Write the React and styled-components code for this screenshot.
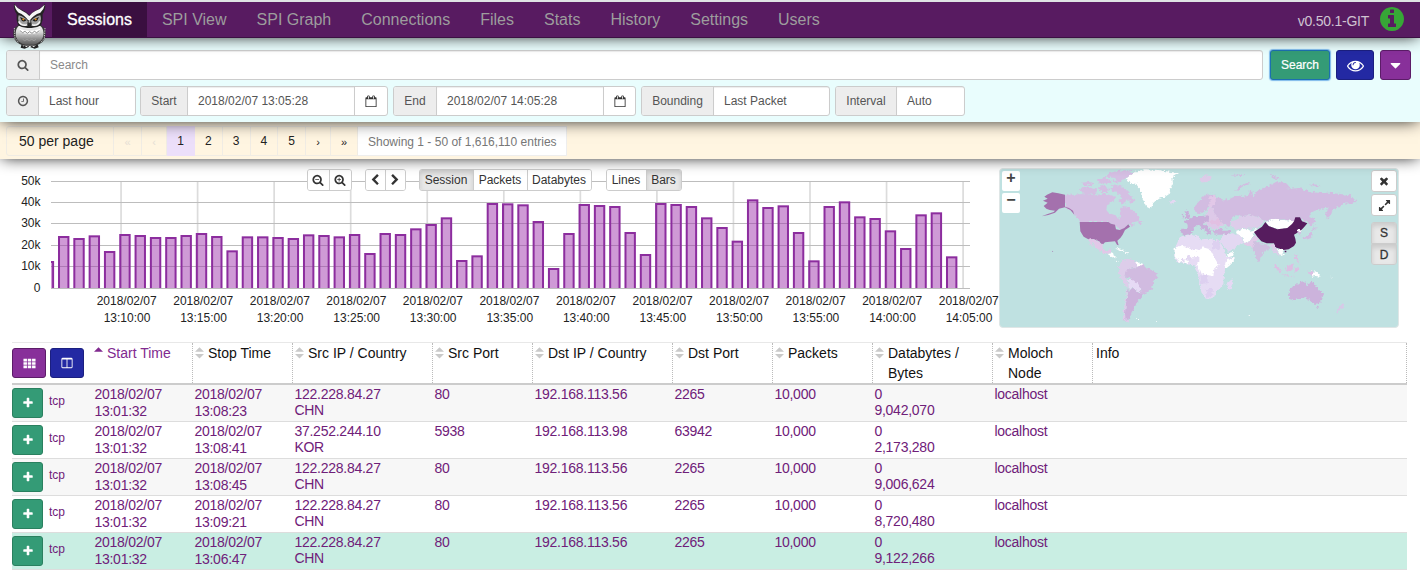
import React from "react";
import styled, { createGlobalStyle } from "styled-components";

const GlobalStyle = createGlobalStyle`
  * { box-sizing: border-box; }
  body {
    margin: 0;
    background: #fff;
    color: #333;
    font-family: "Liberation Sans", Arial, sans-serif;
    font-size: 12px;
    overflow: hidden;
  }
`;

const GLYPHS = {
  search:
    "M1216 832q0-185-131.5-316.5t-316.5-131.5-316.5 131.5-131.5 316.5 131.5 316.5 316.5 131.5 316.5-131.5 131.5-316.5zm512 832q0 52-38 90t-90 38q-54 0-90-38l-343-342q-179 124-399 124-143 0-273.5-55.5t-225-150-150-225-55.5-273.5 55.5-273.5 150-225 225-150 273.5-55.5 273.5 55.5 225 150 150 225 55.5 273.5q0 220-124 399l343 343q37 37 37 90z",
  plus:
    "M1600 736v192q0 40-28 68t-68 28h-416v416q0 40-28 68t-68 28h-192q-40 0-68-28t-28-68v-416h-416q-40 0-68-28t-28-68v-192q0-40 28-68t68-28h416v-416q0-40 28-68t68-28h192q40 0 68 28t28 68v416h416q40 0 68 28t28 68z",
  clock:
    "M1024 544v448q0 14-9 23t-23 9h-320q-14 0-23-9t-9-23v-64q0-14 9-23t23-9h224v-352q0-14 9-23t23-9h64q14 0 23 9t9 23zm416 352q0-148-73-273t-198-198-273-73-273 73-198 198-73 273 73 273 198 198 273 73 273-73 198-198 73-273zm224 0q0 209-103 385.5t-279.5 279.5-385.5 103-385.5-103-279.5-279.5-103-385.5 103-385.5 279.5-279.5 385.5-103 385.5 103 279.5 279.5 103 385.5z",
  info:
    "M1152 1376v-160q0-14-9-23t-23-9h-96v-512q0-14-9-23t-23-9h-320q-14 0-23 9t-9 23v160q0 14 9 23t23 9h96v320h-96q-14 0-23 9t-9 23v160q0 14 9 23t23 9h448q14 0 23-9t9-23zm-128-896v-160q0-14-9-23t-23-9h-192q-14 0-23 9t-9 23v160q0 14 9 23t23 9h192q14 0 23-9t9-23zm640 416q0 209-103 385.5t-279.5 279.5-385.5 103-385.5-103-279.5-279.5-103-385.5 103-385.5 279.5-279.5 385.5-103 385.5 103 279.5 279.5 103 385.5z",
  eye:
    "M1664 960q-152-236-381-353 61 104 61 225 0 185-131.5 316.5t-316.5 131.5-316.5-131.5-131.5-316.5q0-121 61-225-229 117-381 353 133 205 333.5 326.5t434.5 121.5 434.5-121.5 333.5-326.5zm-720-384q0-20-14-34t-34-14q-125 0-214.5 89.5t-89.5 214.5q0 20 14 34t34 14 34-14 14-34q0-86 61-147t147-61q20 0 34-14t14-34zm848 384q0 34-20 69-140 230-376.5 368.5t-499.5 138.5-499.5-139-376.5-368q-20-35-20-69t20-69q140-229 376.5-368t499.5-139 499.5 139 376.5 368q20 35 20 69z",
  caret:
    "M1408 704q0 26-19 45l-448 448q-19 19-45 19t-45-19l-448-448q-19-19-19-45t19-45 45-19h896q26 0 45 19t19 45z",
  times:
    "M1490 1322q0 40-28 68l-136 136q-28 28-68 28t-68-28l-294-294-294 294q-28 28-68 28t-68-28l-136-136q-28-28-28-68t28-68l294-294-294-294q-28-28-28-68t28-68l136-136q28-28 68-28t68 28l294 294 294-294q28-28 68-28t68 28l136 136q28 28 28 68t-28 68l-294 294 294 294q28 28 28 68z",
  expand:
    "M883 1056q0 13-10 23l-332 332 144 144q19 19 19 45t-19 45-45 19h-448q-26 0-45-19t-19-45v-448q0-26 19-45t45-19 45 19l144 144 332-332q10-10 23-10t23 10l114 114q10 10 10 23zm781-864v448q0 26-19 45t-45 19-45-19l-144-144-332 332q-10 10-23 10t-23-10l-114-114q-10-10-10-23t10-23l332-332-144-144q-19-19-19-45t19-45 45-19h448q26 0 45 19t19 45z",
  left:
    "M1427 301l-531 531 531 531q19 19 19 45t-19 45l-166 166q-19 19-45 19t-45-19l-742-742q-19-19-19-45t19-45l742-742q19-19 45-19t45 19l166 166q19 19 19 45t-19 45z",
  right:
    "M365 301l531 531-531 531q-19 19-19 45t19 45l166 166q19 19 45 19t45-19l742-742q19-19 19-45t-19-45l-742-742q-19-19-45-19t-45 19l-166 166q-19 19-19 45t19 45z",
  calendar:
    "M192 1664h1408v-1024h-1408v1024zm384-1152v-288q0-14-9-23t-23-9h-64q-14 0-23 9t-9 23v288q0 14 9 23t23 9h64q14 0 23-9t9-23zm768 0v-288q0-14-9-23t-23-9h-64q-14 0-23 9t-9 23v288q0 14 9 23t23 9h64q14 0 23-9t9-23zm384-64v1280q0 52-38 90t-90 38h-1408q-52 0-90-38t-38-90v-1280q0-52 38-90t90-38h128v-96q0-66 47-113t113-47h64q66 0 113 47t47 113v96h384v-96q0-66 47-113t113-47h64q66 0 113 47t47 113v96h128q52 0 90 38t38 90z",
  columns:
    "M224 1536h608v-1152h-640v1120q0 13 9.5 22.5t22.5 9.5zm1376-32v-1120h-640v1152h608q13 0 22.5-9.5t9.5-22.5zm128-1216v1216q0 66-47 113t-113 47h-1344q-66 0-113-47t-47-113v-1216q0-66 47-113t113-47h1344q66 0 113 47t47 113z",
  grid:
    "M64 256h480v352H64zM656 256h480v352H656zM1248 256h480v352h-480zM64 720h480v352H64zM656 720h480v352H656zM1248 720h480v352h-480zM64 1184h480v352H64zM656 1184h480v352H656zM1248 1184h480v352h-480z",
};
GLYPHS.zoomOut = GLYPHS.search + "M480 768h576v128h-576z";
GLYPHS.zoomIn = GLYPHS.zoomOut + "M704 544h128v224h-128zM704 896h128v224h-128z";

const Svg = styled.svg`
  display: block;
  flex: none;
  fill: currentColor;
`;
const Icon = ({ name, size = 12 }) => (
  <Svg width={size} height={size} viewBox="0 0 1792 1792">
    <path d={GLYPHS[name]} />
  </Svg>
);

const Page = styled.div`
  width: 1420px;
  height: 573px;
  overflow: hidden;
  display: flex;
  flex-direction: column;
`;

/* ---------- navigation ---------- */
const Nav = styled.nav`
  position: relative;
  z-index: 4;
  flex: none;
  display: flex;
  height: 38px;
  padding-left: 52px;
  background: #581b61;
  border-top: 2px solid #dfe3e4;
  border-bottom: 1px solid #3c1043;
  box-shadow: 0 0 16px -2px #000;
`;
const NavItem = styled.a`
  padding: 0 15px;
  line-height: 35px;
  font-size: 16px;
  color: ${(p) => (p.$active ? "#fff" : "#9d9d9d")};
  background: ${(p) => (p.$active ? "#3a0f40" : "transparent")};
  -webkit-text-stroke: ${(p) => (p.$active ? "0.3px #fff" : "0")};
`;
const Version = styled.div`
  margin-left: auto;
  padding: 3px 14px 0 0;
  display: flex;
  align-items: center;
  gap: 9px;
  font-size: 14px;
  letter-spacing: -0.25px;
  color: #cfc3d1;
`;
const InfoBadge = styled.span`
  color: #37a637;
  margin-top: -4px;
`;
const OwlBox = styled.svg`
  position: absolute;
  left: 12px;
  top: 1px;
`;

const Owl = () => (
  <OwlBox width="36" height="46" viewBox="36 9 108 138">
    <defs>
      <linearGradient id="owlBody" x1="0" y1="0" x2="0" y2="1">
        <stop offset="0" stopColor="#f4f4f4" />
        <stop offset="0.35" stopColor="#d5d5d5" />
        <stop offset="0.7" stopColor="#8d8d8d" />
        <stop offset="1" stopColor="#5a5a5a" />
      </linearGradient>
    </defs>
    <path d="M66 128L62 143L74 146L88 140L104 146L116 142L110 126z" fill="#222" />
    <path d="M69 138l5-4 5 5 6-5 4 6 6-6 6 5 6-5" stroke="#e8e8e8" strokeWidth="4" fill="none" />
    <path d="M54 76Q37 84 40 106Q44 132 72 137H106Q134 130 137 106Q139 84 124 76z" fill="#3a3a3a" />
    <path d="M56 78Q44 88 48 110Q55 130 76 134H102Q125 128 130 108Q133 88 121 78z" fill="url(#owlBody)" />
    <path d="M43 84l2 32M135 84l-2 32M48 118l8 10M130 118l-8 10" stroke="#c4c4c4" strokeWidth="3" strokeDasharray="4 3" />
    <path d="M42 11Q40 28 50 42Q48 62 54 76Q70 86 88 84Q108 86 123 76Q130 60 128 42Q138 28 135 11Q124 24 106 32Q96 37 88 46Q80 36 68 31Q52 24 42 11z" fill="#242424" />
    <path d="M44 14Q45 28 56 38Q74 44 87 64Q100 44 121 38Q132 28 134 14Q122 27 106 33Q95 38 88 48Q80 38 66 32Q52 25 44 14z" fill="#f7f7f7" />
    <path d="M56 46Q52 60 60 72Q72 78 82 72L84 64Q74 50 56 46zM121 46Q126 60 117 72Q106 78 95 72L92 64Q102 50 121 46z" fill="#a2a2a2" />
    <path d="M56 64Q64 80 82 74M120 64Q112 80 95 74" stroke="#f2f2f2" strokeWidth="5" fill="none" />
    <path d="M60 51L80 60Q74 67 66 63zM117 51L97 60Q102 67 111 63z" fill="#1a1a1a" />
    <circle cx="70" cy="58" r="3.4" fill="#d98a1f" />
    <circle cx="107" cy="58" r="3.4" fill="#d98a1f" />
    <path d="M84 60h9l1 8-5 12-6-12z" fill="#2c2c2c" />
    <path d="M86 60h5v8h-5z" fill="#bbb" />
    <path d="M58 86Q88 98 121 86L117 97Q88 106 62 97z" fill="#fff" />
    <path d="M60 92l8 6 7-4 7 6 7-5 7 5 7-6 7 4 8-6" stroke="#777" strokeWidth="2.5" fill="none" />
    <path d="M62 106l6 5 6-5 7 6 7-6 7 6 7-6 6 5 7-5M68 118l6 4 7-4 7 4 7-4 7 4 6-4" stroke="#a9a9a9" strokeWidth="2" fill="none" />
  </OwlBox>
);

/* ---------- search form ---------- */
const SearchPanel = styled.section`
  position: relative;
  z-index: 3;
  flex: none;
  height: 84px;
  padding: 12px 9px 6px 6px;
  display: flex;
  flex-direction: column;
  gap: 6px;
  background: #e9fdfd;
  box-shadow: 0 0 16px -2px #000;
`;
const FormRow = styled.div`
  display: flex;
`;
const Group = styled.div`
  display: flex;
  height: 30px;
  width: ${(p) => p.$w}px;
  margin-right: ${(p) => p.$mr || 5}px;
  border: 1px solid #ccc;
  border-radius: 3px;
  overflow: hidden;
  background: #fff;
  color: #555;
`;
const Addon = styled.span`
  width: ${(p) => p.$w}px;
  flex: none;
  display: flex;
  align-items: center;
  justify-content: center;
  background: #ededed;
  border-right: 1px solid #ccc;
`;
const Value = styled.span`
  flex: 1;
  padding-left: 10px;
  line-height: 28px;
  color: ${(p) => (p.$hint ? "#8a8a8a" : "#555")};
  box-shadow: inset 0 1px 1px rgba(0, 0, 0, 0.075);
`;
const PickerButton = styled.span`
  width: ${(p) => p.$w}px;
  display: flex;
  align-items: center;
  justify-content: center;
  border-left: 1px solid #ccc;
  color: #333;
`;
const tones = {
  green: ["#349b76", "#2a805f"],
  blue: ["#2329a3", "#1b1f80"],
  purple: ["#88309a", "#5c1c68"],
};
const Button = styled.button`
  width: ${(p) => p.$w}px;
  height: 30px;
  flex: none;
  padding: 0;
  display: flex;
  align-items: center;
  justify-content: center;
  font: 12px "Liberation Sans", Arial, sans-serif;
  color: #fff;
  background: ${(p) => tones[p.$tone][0]};
  border: 1px solid ${(p) => (p.$focus ? "#1c6fb0" : tones[p.$tone][1])};
  border-radius: 3px;
  box-shadow: ${(p) => (p.$focus ? "0 0 1px 1px #7db8ea" : "none")};
  -webkit-text-stroke: 0.2px #fff;
`;
const SearchActions = styled.div`
  display: flex;
  gap: 6px;
`;

/* ---------- paging ---------- */
const PagerPanel = styled.section`
  position: relative;
  z-index: 2;
  flex: none;
  height: 37px;
  padding: 4px 6px;
  display: flex;
  background: #fff5e1;
  box-shadow: 0 0 16px -2px #000;
`;
const PageSize = styled.span`
  width: 108px;
  height: 30px;
  padding-left: 12px;
  line-height: 29px;
  font-size: 14px;
  color: #222;
  border: 1px solid #f0ece4;
  border-radius: 3px 0 0 3px;
`;
const PageLink = styled.span`
  width: ${(p) => p.$w}px;
  height: 30px;
  line-height: ${(p) => (p.$arrow ? 30 : 28)}px;
  font-size: ${(p) => (p.$arrow ? 11 : 12)}px;
  text-align: center;
  color: ${(p) => (p.$off ? "#e6e0d6" : "#222")};
  background: ${(p) => (p.$active ? "#ecdffa" : "transparent")};
  border: 1px solid ${(p) => (p.$active ? "#ecdffa" : "#f0ece4")};
  border-left: 0;
`;
const Showing = styled.span`
  width: 209px;
  height: 30px;
  padding-left: 10px;
  line-height: 30px;
  color: #777;
  background: #fff;
  border: 1px solid #eee;
  border-left: 0;
`;

/* ---------- chart ---------- */
const Visuals = styled.section`
  flex: none;
  height: 183px;
  display: flex;
`;
const ChartArea = styled.div`
  position: relative;
  width: 999px;
  height: 183px;
`;
const ChartSvg = styled.svg`
  display: block;
  font-family: "Liberation Sans", Arial, sans-serif;
  font-size: 12px;
  fill: #222;
`;
const ChartTools = styled.div`
  position: absolute;
  left: 307px;
  top: 10px;
  display: flex;
`;
const ToolGroup = styled.div`
  display: flex;
  height: 22px;
  margin-right: ${(p) => p.$mr}px;
  border: 1px solid #ccc;
  border-radius: 3px;
  background: #fff;
  overflow: hidden;
`;
const Tool = styled.span`
  width: ${(p) => p.$w}px;
  display: flex;
  align-items: center;
  justify-content: center;
  padding-right: 1px;
  color: #333;
  background: ${(p) => (p.$on ? "#e8e8e8" : "#fff")};
  box-shadow: ${(p) => (p.$on ? "inset 0 3px 5px rgba(0,0,0,.125)" : "none")};
  & + & { border-left: 1px solid #ccc; }
`;

const barTops = [
  303, 228, 234, 226, 273, 222, 225, 231, 231, 225, 219, 228, 271, 229, 229, 231, 234, 223, 225, 229,
  222, 279, 219, 222, 205, 192, 172, 300, 286, 129, 130, 133, 183, 324, 219, 132, 135, 138, 216, 282,
  129, 132, 138, 172, 201, 242, 118, 141, 136, 216, 301, 138, 124, 169, 174, 211, 264, 163, 157, 289,
].map((t) => t / 3 + 1);
const ticks = ["13:10", "13:15", "13:20", "13:25", "13:30", "13:35", "13:40", "13:45", "13:50", "13:55", "14:00", "14:05"];
const levels = [
  ["50k", 22.5], ["40k", 43.5], ["30k", 64.5], ["20k", 86.5], ["10k", 107.5], ["0", 129.5],
];

const Chart = () => (
  <ChartSvg width="999" height="183">
    <clipPath id="plot"><rect x="51" y="0" width="920" height="129" /></clipPath>
    {ticks.map((t, i) => (
      <rect key={t} x={120.2 + i * 76.55} y="22" width="1.7" height="108" fill="#dcdcdc" />
    ))}
    {levels.map(([label, y]) => (
      <React.Fragment key={label}>
        <path d={`M51 ${y}H970`} stroke="#bdbdbd" />
        <text x="40.5" y={y + 3.5} textAnchor="end">{label}</text>
      </React.Fragment>
    ))}
    <g clipPath="url(#plot)">
      {barTops.map((top, i) => (
        <rect
          key={i}
          x={43.7 + i * 15.31}
          y={top + 1}
          width="9.4"
          height={140 - top}
          fill="#a036ad"
          fillOpacity="0.5"
          stroke="#8c2d9e"
          strokeWidth="2"
        />
      ))}
    </g>
    {ticks.map((t, i) => (
      <g key={t} textAnchor="middle">
        <text x={126.7 + i * 76.55} y="146">2018/02/07</text>
        <text x={127 + i * 76.55} y="163">{t}:00</text>
      </g>
    ))}
  </ChartSvg>
);

/* ---------- map ---------- */
const MapBox = styled.div`
  position: relative;
  width: 400px;
  height: 160px;
  margin-top: 9px;
  border: 1px solid #dfe6e6;
  border-radius: 4px;
  background: #bfe1e1;
  overflow: hidden;
`;
const MapZoom = styled.div`
  position: absolute;
  left: 2px;
  top: 2px;
  display: flex;
  flex-direction: column;
  gap: 2px;
`;
const ZoomKey = styled.span`
  width: 18px;
  height: 20px;
  border-radius: 2px;
  background: #fff;
  color: #444;
  font-size: 16px;
  font-weight: bold;
  line-height: 14px;
  text-align: center;
`;
const MapTools = styled.div`
  position: absolute;
  right: 1px;
  top: 1px;
  display: flex;
  flex-direction: column;
`;
const MapKey = styled.span`
  width: 26px;
  height: ${(p) => p.$h || 22}px;
  margin-bottom: ${(p) => p.$mb || 0}px;
  display: flex;
  align-items: center;
  justify-content: center;
  color: #333;
  font-size: 12px;
  -webkit-text-stroke: 0.3px #333;
  background: ${(p) => (p.$on ? "#e8e8e8" : "#fff")};
  border: 1px solid #ccc;
  border-radius: ${(p) => p.$r || "3px"};
  box-shadow: ${(p) => (p.$on ? "inset 0 3px 5px rgba(0,0,0,.125)" : "none")};
`;

const west = [
  ["#d5bfe3", "M210 103L232 105L262 102L300 106L330 100L352 108L366 112L352 126L336 140L336 152L352 160L368 164L372 178L378 166L376 148L384 138L404 142L412 154L424 160L434 176L428 184L408 188L420 194L410 198L402 192L388 206L372 208L362 196L344 190L338 186H256L246 172L232 156L210 142z"],
  ["#d5bfe3", "M252 88L268 80L288 84L306 88L304 102L282 104L262 100zM258 68L282 66L300 70L288 76L266 76zM312 80L330 76L344 86L338 96L318 96zM352 72L376 78L396 92L412 112L418 124L408 128L396 118L386 134L368 122L380 112L366 96L350 92zM306 58L330 54L352 62L342 70L312 70zM330 50L346 38L372 32L400 30L416 36L402 50L386 56L370 68L356 66L362 54zM430 184L442 186L438 194L428 190z"],
  ["#a471ad", "M254 186H340L348 191L360 194L363 208L374 210L388 204L400 193L405 200L390 210L383 224L376 234L367 242L371 256L366 254L360 244L344 245L330 247L322 255L312 244L296 238L280 238L266 230L256 214z"],
  ["#a471ad", "M210 104L190 100L172 97L156 104L148 110L158 116L144 122L158 128L146 138L154 146L164 150L180 152L176 156L158 162L140 169L160 165L180 158L192 146L210 142L226 150L238 164L234 152L222 144L210 140zM172 272L175 275L171 275z"],
  ["#e2c8e8", "M280 238L296 238L312 244L322 254L324 268L330 274L350 268L346 278L338 282L322 278L308 268L298 256L286 246L296 262L290 258z"],
  ["#fff", "M338 282L350 280L362 288L360 298L352 292zM360 264L378 266L390 274L376 272zM392 276L404 278L394 280zM362 302L372 304L368 306z"],
  ["#fff", "M392 58L410 42L424 34L452 28L490 30L514 34L552 40L532 52L534 72L524 88L526 100L508 112L484 120L472 132L466 146L454 140L446 124L440 106L436 88L424 72L406 68z"],
  ["#e3d8f2", "M524 122L536 119L544 125L534 131L522 129z"],
  ["#ddcdea", "M372 322L380 300L400 296L424 304L442 318L430 322L402 326L404 346L388 346L396 362L402 386L384 366L372 342z"],
  ["#fff", "M420 304L446 312L440 322L426 316z"],
  ["#d1bbe0", "M386 348L392 334L404 326L420 324L436 318L446 312L450 322L470 330L488 340L486 352L476 366L472 384L456 396L444 408L434 400L436 386L422 378L410 358z"],
  ["#e6daf5", "M398 358L410 356L424 368L434 380L436 396L424 392L416 384L402 386z"],
  ["#cdb3dc", "M402 386L416 386L434 400L444 408L436 418L424 430L418 446L410 456L404 476L396 488L388 480L390 450L394 420z"],
  ["#ddcdea", "M396 380L400 388L394 424L390 460L392 480L408 486L396 488L386 478L386 446L394 410z"],
  ["#fff", "M424 474h5v3h-5zM482 484h4v2h-4z"],
];
const east = [
  ["#d2bce1", "M40 116L60 112L64 122L90 116L112 106L130 110L146 108L146 94L156 90L160 112L172 92L184 86L206 78L232 64L256 70L270 86L300 84L322 92L352 98L388 98L420 102L452 106L470 126L454 128L430 132L420 140L398 148L392 164L380 178L378 160L388 142L366 146L336 156L328 168L344 176L338 200L320 186L298 170L280 184L252 178L218 180L196 184L178 172L150 166L128 168L106 166L92 180L90 196L78 200L66 184L46 172L42 154L34 136z"],
  ["#d2bce1", "M106 92L118 78L146 68L150 72L126 80L112 96zM208 44L224 48L242 58L224 56zM86 46L108 44L136 42L122 48zM330 72L352 74L362 80L338 78zM340 168L346 180L344 188z"],
  ["#ddcbe8", "M-2 56L18 46L36 50L26 62L10 70zM8 62L16 60z"],
  ["#d2bce1", "M-18 146L-8 126L12 108L34 100L46 106L44 124L34 134L24 142L18 150L6 160L-10 162z"],
  ["#e2c8e8", "M26 110L44 104L48 130L32 144L24 136L32 124z"],
  ["#ddc9e8", "M24 146L38 142L44 160L62 182L72 196L56 204L36 208L26 196L12 188L16 166z"],
  ["#e2c0e2", "M28 180L58 178L70 188L54 196L32 192z"],
  ["#c9aeda", "M-56 206L-36 206L-38 192L-48 184L-30 178L-16 168L6 168L28 166L26 184L12 190L22 202L34 220L28 224L14 208L2 206L0 196L-12 196L-20 208L-28 222L-48 226L-58 220z"],
  ["#c9aeda", "M-46 176L-40 164L-50 150L-36 152L-30 168L-28 178zM-56 168L-50 162L-50 176z"],
  ["#cdb3dc", "M36 212L58 206L88 208L92 220L66 224L44 224z"],
  ["#ddcdea", "M92 186L112 178L126 168L156 166L182 174L192 184L178 200L152 206L128 204L108 210L98 206z"],
  ["#fff", "M106 212L130 206L150 212L174 206L166 216L156 232L150 244L130 246L128 232L112 222z"],
  ["#e3d8f2", "M66 226L92 220L112 222L126 230L130 250L118 256L100 268L84 276L76 266L62 246z"],
  ["#fff", "M80 280L102 276L98 288L84 292z"],
  ["#e1cbe8", "M132 248L150 244L160 230L168 226L176 236L164 250L158 264L148 258L134 256z"],
  ["#cfc0e0", "M158 266L158 252L168 242L180 250L206 254L210 268L196 270L184 288L178 306L172 304L164 284z"],
  ["#fff", "M196 186L218 180L254 180L282 184L286 194L264 206L236 210L210 202z"],
  ["#561c5e", "M162 216L186 200L196 186L206 198L232 208L262 204L276 192L282 184L286 172L300 172L306 184L322 190L312 202L304 210L292 218L282 224L286 236L288 248L282 258L266 268L250 270L232 264L226 262L222 250L200 250L184 244L172 230z"],
  ["#561c5e", "M254 272h5v5h-5z"],
  ["#d2bce1", "M292 216L304 210L302 222L296 226zM308 232L326 228L336 212L342 198L350 206L338 214L336 232L320 238L310 240z"],
  ["#fff", "M290 210L306 208L296 218z"],
  ["#ddcdea", "M208 254L222 252L228 266L236 278L238 288L228 282L216 264z"],
  ["#fff", "M230 266L246 268L252 284L244 288L236 276z"],
  ["#dcbfe3", "M222 312L236 322L246 340L238 338L226 322zM246 342L272 348L290 352L262 350zM258 322L278 310L278 328L264 336L256 330zM286 322L296 322L290 336L284 334zM282 282L292 288L298 312L286 296zM322 334L340 334L338 350z"],
  ["#fff", "M338 332L352 338L362 350L346 348L336 350z"],
  ["#ccb3dc", "M266 396L270 386L286 376L298 366L314 362L318 372L328 376L334 358L342 370L354 386L370 402L368 414L358 430L340 432L328 420L312 412L292 418L274 422L268 412zM348 440L357 442L352 447z"],
  ["#d9c7e8", "M428 430L434 436L424 446L408 460L416 444z"],
  ["#e6dcf4", "M-60 230L-30 224L-6 228L0 238L30 236L58 242L68 262L80 290L104 294L94 310L76 326L72 346L70 376L50 394L42 412L20 420L6 400L-2 372L-4 344L-16 316L-44 312L-70 304L-78 286L-74 262z"],
  ["#fff", "M-76 266L-56 256L-40 262L-18 270L0 272L8 262L30 268L40 284L46 298L58 318L42 328L40 348L14 344L0 336L-8 318L-20 304L-26 294L-40 312L-62 304L-76 290z"],
  ["#fff", "M80 296L104 294L94 312L78 326L74 316z"],
  ["#e3d8f2", "M-38 286L-26 290L-30 304L-40 300zM-56 300L-46 298L-46 310z"],
  ["#e6dcf4", "M-24 292L-2 290L-2 306L-14 316L-24 308z"],
  ["#ddd0f0", "M36 242L58 242L62 270L36 268zM-2 346L20 348L24 370L0 372zM20 388L40 386L36 408L18 416z"],
  ["#e6d8f4", "M82 366L98 358L98 370L88 394L82 388z"],
  ["#fff", "M146 466h4v2h-4zM392 350h4v2h-4z"],
];
const solid = ["#a471ad", "#561c5e"];
const Region = ({ fill, d }) => (
  <path d={d} fill={fill} filter={solid.includes(fill) ? undefined : "url(#coast)"} />
);
const World = () => (
  <Svg width="398" height="158">
    <filter id="coast" x="-10%" y="-10%" width="120%" height="120%" colorInterpolationFilters="sRGB">
      <feTurbulence type="fractalNoise" baseFrequency="0.12" numOctaves="2" seed="4" />
      <feDisplacementMap in="SourceGraphic" scale="15" xChannelSelector="R" yChannelSelector="G" />
    </filter>
    <g transform="translate(-5 -9) scale(.33333)">
      {west.slice(0, 2).map(([fill, d], i) => <Region key={i} d={d} fill={fill} />)}
      <path d="M336 136L352 128L366 124L374 136L364 146L372 160L370 178L362 166L342 160L334 150z" fill="#bfe1e1" />
      {west.slice(2).map(([fill, d], i) => <Region key={i} d={d} fill={fill} />)}
    </g>
    <g transform="translate(200 -9) scale(.33333)">
      {east.map(([fill, d], i) => <Region key={i} d={d} fill={fill} />)}
      <path d="M70 206L86 204L84 212L66 212zM100 200L108 214L110 226L102 222L96 206z" fill="#bfe1e1" />
    </g>
  </Svg>
);

/* ---------- sessions table ---------- */
const Table = styled.section`
  width: 1395px;
  margin-left: 12px;
  border-top: 1px solid #e8e8e8;
`;
const columns = "80px 100px 100px 140px 100px 140px 100px 100px 120px 100px 315px";
const HeadRow = styled.div`
  display: grid;
  grid-template-columns: ${columns};
  height: 42px;
  border-bottom: 2px solid #ccc;
  font-size: 14px;
  line-height: 20px;
  color: #111;
`;
const HeadCell = styled.div`
  display: flex;
  padding-left: ${(p) => (p.$last ? 3 : 2)}px;
  padding-right: 5px;
  border-left: ${(p) => (p.$first ? 0 : "1px dotted #bbb")};
  border-right: ${(p) => (p.$last ? "1px dotted #bbb" : 0)};
  color: ${(p) => (p.$sorted ? "#812a8f" : "inherit")};
`;
const SortMark = styled.svg`
  flex: none;
  display: block;
  margin: 4px 4px 0 0;
`;
const HeadButtons = styled.div`
  display: flex;
  gap: 4px;
  padding-top: 5px;
`;
const Row = styled.div`
  display: grid;
  grid-template-columns: ${columns};
  height: 37px;
  border-bottom: 1px solid #ddd;
  background: ${(p) => p.$bg};
  color: #6f2079;
`;
const Protocol = styled.div`
  display: flex;
  gap: 6px;
  padding-top: 3px;
  line-height: 26px;
  font-size: 12px;
`;
const Cell = styled.div`
  padding: 1px 0 0 2.4px;
  font-size: 14px;
  letter-spacing: -0.25px;
  line-height: ${(p) => p.$lh || 16}px;
  white-space: pre-line;
`;

const headers = ["Start Time", "Stop Time", "Src IP / Country", "Src Port", "Dst IP / Country", "Dst Port", "Packets", "Databytes / Bytes", "Moloch Node", "Info"];
const sessions = [
  ["13:08:23", "122.228.84.27\nCHN", "80", "192.168.113.56", "2265", "9,042,070", "#f7f7f7"],
  ["13:08:41", "37.252.244.10\nKOR", "5938", "192.168.113.98", "63942", "2,173,280", "#fff"],
  ["13:08:45", "122.228.84.27\nCHN", "80", "192.168.113.56", "2265", "9,006,624", "#f7f7f7"],
  ["13:09:21", "122.228.84.27\nCHN", "80", "192.168.113.56", "2265", "8,720,480", "#fff"],
  ["13:06:47", "122.228.84.27\nCHN", "80", "192.168.113.56", "2265", "9,122,266", "#c9eee3"],
];

const Field = ({ label, value, w, lw, mr, picker }) => (
  <Group $w={w} $mr={mr}>
    <Addon $w={lw}>{label}</Addon>
    <Value>{value}</Value>
    {picker && <PickerButton $w={picker}><Icon name="calendar" /></PickerButton>}
  </Group>
);

export default function App() {
  return (
    <Page>
      <GlobalStyle />
      <Nav>
        <Owl />
        {["Sessions", "SPI View", "SPI Graph", "Connections", "Files", "Stats", "History", "Settings", "Users"].map((n, i) => (
          <NavItem key={n} $active={i === 0}>{n}</NavItem>
        ))}
        <Version>
          v0.50.1-GIT
          <InfoBadge><Icon name="info" size={28} /></InfoBadge>
        </Version>
      </Nav>

      <SearchPanel>
        <FormRow>
          <Group $w={1257} $mr={7}>
            <Addon $w={33}><Icon name="search" /></Addon>
            <Value $hint>Search</Value>
          </Group>
          <SearchActions>
            <Button $tone="green" $w={60} $focus>Search</Button>
            <Button $tone="blue" $w={38}><Icon name="eye" size={17} /></Button>
            <Button $tone="purple" $w={31}><Icon name="caret" size={17} /></Button>
          </SearchActions>
        </FormRow>
        <FormRow>
          <Field w={130} lw={32} mr={4} label={<Icon name="clock" />} value="Last hour" />
          <Field w={248} lw={47} label="Start" value="2018/02/07 13:05:28" picker={33} />
          <Field w={243} lw={43} label="End" value="2018/02/07 14:05:28" picker={32} />
          <Field w={189} lw={72} label="Bounding" value="Last Packet" />
          <Field w={130} lw={61} label="Interval" value="Auto" />
        </FormRow>
      </SearchPanel>

      <PagerPanel>
        <PageSize>50 per page</PageSize>
        <PageLink $w={28} $off $arrow>«</PageLink>
        <PageLink $w={25} $off $arrow>‹</PageLink>
        <PageLink $w={28} $active>1</PageLink>
        <PageLink $w={27.5}>2</PageLink>
        <PageLink $w={28}>3</PageLink>
        <PageLink $w={27.5}>4</PageLink>
        <PageLink $w={28}>5</PageLink>
        <PageLink $w={25} $arrow>›</PageLink>
        <PageLink $w={27} $arrow>»</PageLink>
        <Showing>Showing 1 - 50 of 1,616,110 entries</Showing>
      </PagerPanel>

      <Visuals>
        <ChartArea>
          <Chart />
          <ChartTools>
            <ToolGroup $mr={13}>
              <Tool $w={21}><Icon name="zoomOut" /></Tool>
              <Tool $w={22}><Icon name="zoomIn" /></Tool>
            </ToolGroup>
            <ToolGroup $mr={13}>
              <Tool $w={19}><Icon name="left" /></Tool>
              <Tool $w={20}><Icon name="right" /></Tool>
            </ToolGroup>
            <ToolGroup $mr={14}>
              <Tool $w={53} $on>Session</Tool>
              <Tool $w={54}>Packets</Tool>
              <Tool $w={64}>Databytes</Tool>
            </ToolGroup>
            <ToolGroup $mr={0}>
              <Tool $w={39}>Lines</Tool>
              <Tool $w={35} $on>Bars</Tool>
            </ToolGroup>
          </ChartTools>
        </ChartArea>
        <MapBox>
          <World />
          <MapZoom>
            <ZoomKey>+</ZoomKey>
            <ZoomKey>−</ZoomKey>
          </MapZoom>
          <MapTools>
            <MapKey $mb={2}><Icon name="times" /></MapKey>
            <MapKey $mb={6}><Icon name="expand" size={13} /></MapKey>
            <MapKey $on $r="3px 3px 0 0">S</MapKey>
            <MapKey $on $h={21} $r="0 0 3px 3px">D</MapKey>
          </MapTools>
        </MapBox>
      </Visuals>

      <Table>
        <HeadRow>
          <HeadButtons>
            <Button $tone="purple" $w={34}><Icon name="grid" size={13} /></Button>
            <Button $tone="blue" $w={34}><Icon name="columns" /></Button>
          </HeadButtons>
          {headers.map((h, i) => (
            <HeadCell key={h} $first={i === 0} $sorted={i === 0} $last={i === 9}>
              {i < 9 && (
                <SortMark width="9" height="12" viewBox="0 0 9 12" fill={i ? "#c9c9c9" : "#812a8f"}>
                  <path d="M0 4.8L4.5 0.3L9 4.8z" />
                  {i > 0 && <path d="M0 6.9H9L4.5 11.4z" />}
                </SortMark>
              )}
              <span>{h}</span>
            </HeadCell>
          ))}
        </HeadRow>
        {sessions.map(([stop, src, sport, dst, dport, bytes, bg], i) => (
          <Row key={i} $bg={bg}>
            <Protocol>
              <Button $tone="green" $w={31}><Icon name="plus" /></Button>
              tcp
            </Protocol>
            <Cell $lh={17}>{"2018/02/07\n13:01:32"}</Cell>
            <Cell $lh={17}>{"2018/02/07\n" + stop}</Cell>
            <Cell>{src}</Cell>
            <Cell>{sport}</Cell>
            <Cell>{dst}</Cell>
            <Cell>{dport}</Cell>
            <Cell>10,000</Cell>
            <Cell>{"0\n" + bytes}</Cell>
            <Cell>localhost</Cell>
          </Row>
        ))}
      </Table>
    </Page>
  );
}
